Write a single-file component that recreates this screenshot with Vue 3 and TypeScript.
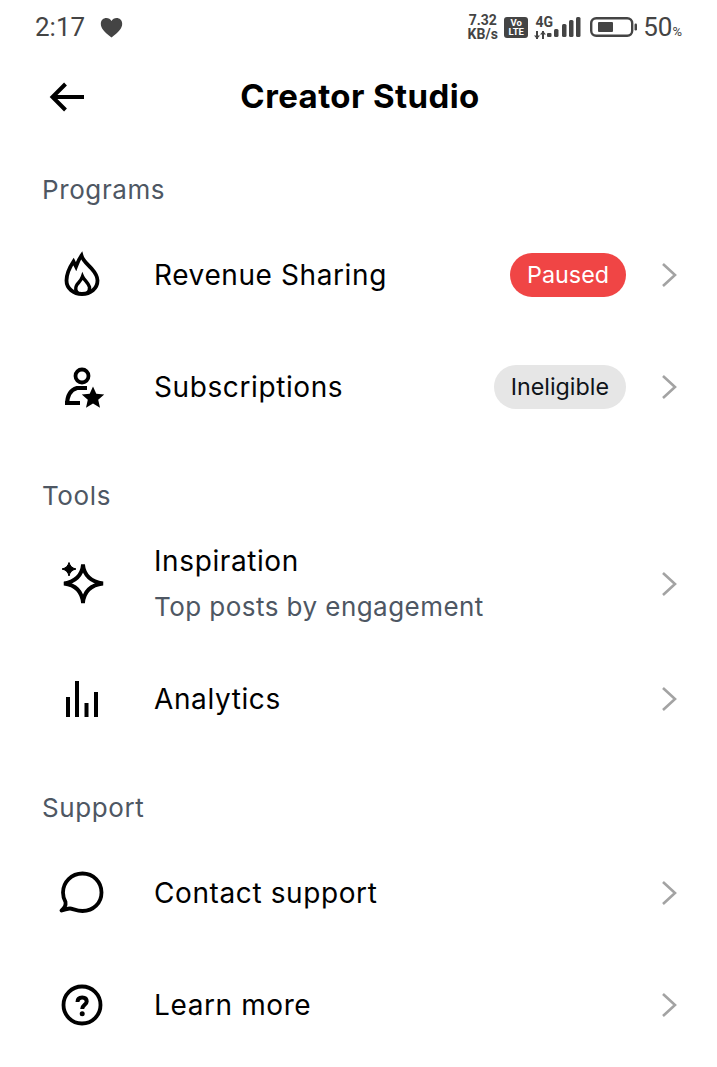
<template>
  <div class="screen">
    <div class="status-bar">
      <div class="status-left">
        <span class="clock">2:17</span>
        <svg class="heart" viewBox="0 0 24 22" width="23" height="21">
          <path d="M12 21.5C4.5 15.5.8 12 .8 7 .8 3.2 3.600 1 6.600 1 8.900 1 10.900 2.200 12 4.300 13.100 2.200 15.100 1 17.400 1c3 0 5.800 2.200 5.800 6 0 5-3.700 8.500-11.200 14.500z" fill="#444" />
        </svg>
      </div>
      <div class="status-right">
        <div class="speed"><span>7.32</span><span>KB/s</span></div>
        <div class="volte"><span>Vo</span><span>LTE</span></div>
        <div class="signal">
          <span class="net">4G</span>
          <svg class="net-arrows" viewBox="0 0 13 8" width="13" height="8">
            <path d="M3 0v8M9 0v8" stroke="#444" stroke-width="2" fill="none" />
            <path d="M3 8 0 4.500h6zM9 0l3 3.500H6z" fill="#444" />
          </svg>
        </div>
        <svg class="bars" viewBox="0 0 34 20" width="34" height="20">
          <rect x="0" y="16" width="4.500" height="4" rx="1" fill="#444" />
          <rect x="7" y="12" width="4.500" height="8" rx="1.500" fill="#444" />
          <rect x="15" y="7" width="4.500" height="13" rx="1.500" fill="#444" />
          <rect x="22" y="3" width="4.500" height="17" rx="1.500" fill="#444" />
          <rect x="29" y="0" width="4.500" height="20" rx="1.500" fill="#444" />
        </svg>
        <svg class="battery" viewBox="0 0 47 20" width="47" height="20">
          <rect x="1.200" y="1.200" width="41" height="17.600" rx="5" fill="none" stroke="#444" stroke-width="2.400" />
          <rect x="8" y="5" width="15" height="10" rx="1" fill="#444" />
          <rect x="44.500" y="6.500" width="2.500" height="7" rx="1.200" fill="#444" />
        </svg>
        <span class="level">50<small>%</small></span>
      </div>
    </div>

    <header class="app-header">
      <svg class="back" viewBox="0 0 36 30" width="36" height="30">
        <path d="M35 15H4M16.500 2 3.500 15l13 13" fill="none" stroke="#000" stroke-width="4" />
      </svg>
      <h1>Creator Studio</h1>
    </header>

    <section v-for="section in sections" :key="section.title" class="section">
      <h2>{{ section.title }}</h2>
      <div
        v-for="item in section.items"
        :key="item.label"
        class="row"
        :class="{ 'row--tall': item.hint }"
      >
        <span class="row-icon">
          <svg viewBox="0 0 48 48" width="48" height="48" v-html="icons[item.icon]" />
        </span>
        <div class="row-copy">
          <div class="row-label">{{ item.label }}</div>
          <div v-if="item.hint" class="row-hint">{{ item.hint }}</div>
        </div>
        <span v-if="item.badge" class="pill" :class="`pill--${item.badge.kind}`">{{ item.badge.text }}</span>
        <svg class="chevron" viewBox="0 0 18 26" width="18" height="26">
          <path d="M3 2l12 11L3 24" fill="none" stroke="#a3a3a3" stroke-width="2.600" />
        </svg>
      </div>
    </section>
  </div>
</template>

<script setup lang="ts">
type IconName = 'flame' | 'person' | 'sparkle' | 'bars' | 'bubble' | 'help'

interface Item {
  icon: IconName
  label: string
  hint?: string
  badge?: { text: string; kind: 'alert' | 'muted' }
}

const sections: { title: string; items: Item[] }[] = [
  {
    title: 'Programs',
    items: [
      { icon: 'flame', label: 'Revenue Sharing', badge: { text: 'Paused', kind: 'alert' } },
      { icon: 'person', label: 'Subscriptions', badge: { text: 'Ineligible', kind: 'muted' } },
    ],
  },
  {
    title: 'Tools',
    items: [
      { icon: 'sparkle', label: 'Inspiration', hint: 'Top posts by engagement' },
      { icon: 'bars', label: 'Analytics' },
    ],
  },
  {
    title: 'Support',
    items: [
      { icon: 'bubble', label: 'Contact support' },
      { icon: 'help', label: 'Learn more' },
    ],
  },
]

const icons: Record<IconName, string> = {
  flame:
    '<path d="M23.500 4.500C25 10 29.500 13 33.500 17.500 37.500 22 39.500 26 39.500 29.500 39.500 37.500 32.500 43 24 43S8.500 37.500 8.500 29.500C8.500 23 11.500 16.500 15.500 10.500L18 15.500C19.500 11.500 21 8 23.500 4.500z" fill="none" stroke="#000" stroke-width="3.800" stroke-linejoin="miter"/><path d="M20 42.500C17.500 40 17 37.500 18.500 34.500 20 32 23 30 24.500 25.500 26 29 30.500 32 31.500 36 32 38.500 31 40.500 29 42.500" fill="none" stroke="#000" stroke-width="3.400"/>',
  person:
    '<circle cx="24" cy="13" r="6.500" fill="none" stroke="#000" stroke-width="3.800"/><path d="M9 42c0-9 3-15 10-17h10M7 40h15" fill="none" stroke="#000" stroke-width="4"/><path d="M35 23.500l3.300 7.300 7.900.7-6 5.300 1.800 7.900-7-4.100-7 4.100 1.800-7.900-6-5.300 7.900-.7z" fill="#000"/>',
  sparkle:
    '<path d="M25 4.500C26 15 32 21.500 45 23.500 32 25 26 31.500 25 43 24 31.500 18 25 6 23.500 18 21.500 24 15 25 4.500z" fill="none" stroke="#000" stroke-width="3.800" stroke-linejoin="miter"/><path d="M11 2.500c1 3.500 3 5.500 7 6.500-4 1-6 3-7 7-1-4-3-6-7-7 4-1 6-3 7-6.500z" fill="#000" stroke="#000" stroke-width="1"/>',
  bars:
    '<path d="M10 22v20M19 6v36M28.500 28v14M38 17v25" fill="none" stroke="#000" stroke-width="4"/>',
  bubble:
    '<path d="M3.500 41.500C6 41.500 9 39.500 12 39.500 14.500 39.500 18.500 42 24.500 42 35.500 42 43.500 34 43.500 23.500S35.500 4.500 24.500 4.500 5 13 5 23.500C5 27 5.800 30 7.500 33 8 36 6 39.500 3.500 41.500z" fill="none" stroke="#000" stroke-width="3.800" stroke-linejoin="round"/>',
  help:
    '<circle cx="24" cy="24" r="18.500" fill="none" stroke="#000" stroke-width="3.800"/><path d="M19.500 21c0-3 2-4.500 4.700-4.500s4.500 1.500 4.500 4c0 3.300-4.500 3.500-4.500 7.500" fill="none" stroke="#000" stroke-width="4"/><circle cx="24.200" cy="32.800" r="2.500" fill="#000"/>',
}
</script>

<style scoped>
.screen {
  width: 717px;
  height: 1067px;
  overflow: hidden;
  background: #fff;
  color: #000;
  font-family: Inter, "Liberation Sans", sans-serif;
}

.status-bar {
  display: flex;
  align-items: center;
  justify-content: space-between;
  height: 54px;
  margin-bottom: 3px;
  padding: 0 35px;
  color: #444;
  font-family: Roboto, "Liberation Sans", sans-serif;
}

.status-left {
  display: flex;
  align-items: center;
  gap: 15px;
}

.clock {
  font-size: 26px;
}

.status-right {
  display: flex;
  align-items: center;
}

.speed {
  display: flex;
  flex-direction: column;
  align-items: center;
  width: 31px;
  margin-right: 1px;
  font-size: 14px;
  font-weight: 700;
  line-height: 14px;
}

.volte {
  display: flex;
  flex-direction: column;
  align-items: center;
  justify-content: center;
  width: 24px;
  height: 21px;
  margin-left: 5px;
  border-radius: 3px;
  background: #444;
  color: #fff;
  font-size: 9.500px;
  font-weight: 700;
  line-height: 9.500px;
}

.signal {
  display: flex;
  flex-direction: column;
  align-items: center;
  width: 20px;
  margin-left: 6px;
  gap: 3px;
}

.net {
  font-size: 14px;
  font-weight: 700;
  line-height: 12px;
}

.net-arrows {
  margin-right: 8px;
}

.bars {
  margin-left: -7px;
}

.battery {
  margin-left: 9px;
}

.level {
  margin-left: 6px;
  font-size: 26px;
  line-height: 1;
}

.level small {
  font-size: 13px;
}

.app-header {
  display: flex;
  align-items: center;
  justify-content: center;
  position: relative;
  height: 80px;
  padding-left: 3px;
  padding-bottom: 2px;
  box-sizing: border-box;
}

.back {
  position: absolute;
  left: 49px;
  top: 25px;
}

h1 {
  margin: 0;
  font-size: 33px;
  font-weight: 700;
  letter-spacing: 0.4px;
}

.section {
  padding: 36px 39px 0 42px;
}

h2 {
  margin: 0 0 12px;
  color: #4e5763;
  font-size: 26px;
  font-weight: 400;
  letter-spacing: 0.6px;
  line-height: 34px;
}

.row {
  display: flex;
  align-items: center;
  height: 112px;
}

.row--tall {
  height: 118px;
}

.row-icon {
  display: flex;
  align-items: center;
  justify-content: center;
  flex: 0 0 80px;
  margin-right: 32px;
}

.row-copy {
  flex: 1;
  min-width: 0;
}

.row-label {
  font-size: 28px;
  letter-spacing: 0.6px;
  line-height: 38px;
}

.row-hint {
  margin-top: 8px;
  color: #4e5763;
  font-size: 26px;
  letter-spacing: 0.45px;
  line-height: 38px;
}

.pill {
  margin-right: 34px;
  padding: 0 17px;
  border-radius: 22px;
  font-size: 23.300px;
  line-height: 44px;
}

.pill--alert {
  background: #f04545;
  color: #fff;
}

.pill--muted {
  background: #e6e6e6;
  color: #0f1419;
}

.chevron {
  flex: none;
}
</style>
<style>
body {
  background: #fff;
}
</style>
